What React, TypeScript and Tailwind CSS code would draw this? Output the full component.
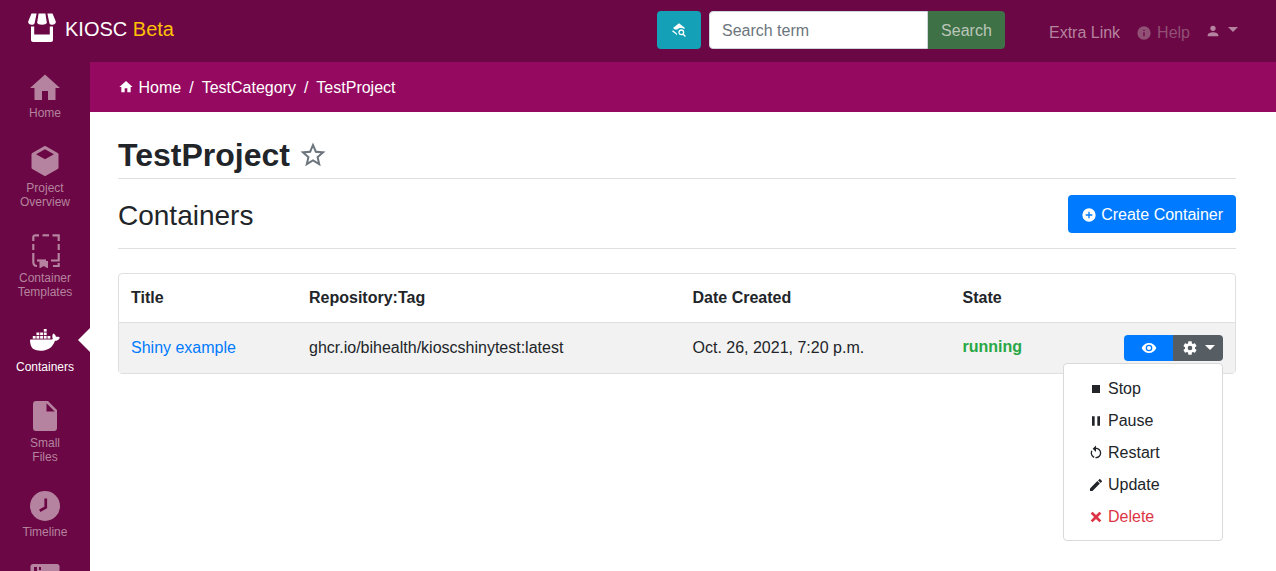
import React from 'react';

const mdi = {
  home: 'M10,20V14H14V20H19V12H22L12,3L2,12H5V20H10Z',
  cube: 'M21,16.5C21,16.88 20.79,17.21 20.47,17.38L12.57,21.82C12.41,21.94 12.21,22 12,22C11.79,22 11.59,21.94 11.43,21.82L3.53,17.38C3.21,17.21 3,16.88 3,16.5V7.5C3,7.12 3.21,6.79 3.53,6.62L11.43,2.18C11.59,2.06 11.79,2 12,2C12.21,2 12.41,2.06 12.57,2.18L20.47,6.62C20.79,6.79 21,7.12 21,7.5V16.5M12,4.15L6.04,7.5L12,10.85L17.96,7.5L12,4.15Z',
  file: 'M13,9V3.5L18.5,9M6,2C4.89,2 4,2.89 4,4V20A2,2 0 0,0 6,22H18A2,2 0 0,0 20,20V8L14,2H6Z',
  eye: 'M12,9A3,3 0 0,0 9,12A3,3 0 0,0 12,15A3,3 0 0,0 15,12A3,3 0 0,0 12,9M12,17A5,5 0 0,1 7,12A5,5 0 0,1 12,7A5,5 0 0,1 17,12A5,5 0 0,1 12,17M12,4.5C7,4.5 2.73,7.61 1,12C2.73,16.39 7,19.5 12,19.5C17,19.5 21.27,16.39 23,12C21.27,7.61 17,4.5 12,4.5Z',
  cog: 'M12,15.5A3.5,3.5 0 0,1 8.5,12A3.5,3.5 0 0,1 12,8.5A3.5,3.5 0 0,1 15.5,12A3.5,3.5 0 0,1 12,15.5M19.43,12.97C19.47,12.65 19.5,12.33 19.5,12C19.5,11.67 19.47,11.34 19.43,11L21.54,9.37C21.73,9.22 21.78,8.95 21.66,8.73L19.66,5.27C19.54,5.05 19.27,4.96 19.05,5.05L16.56,6.05C16.04,5.66 15.5,5.32 14.87,5.07L14.5,2.42C14.46,2.18 14.25,2 14,2H10C9.75,2 9.54,2.18 9.5,2.42L9.13,5.07C8.5,5.32 7.96,5.66 7.44,6.05L4.95,5.05C4.73,4.96 4.46,5.05 4.34,5.27L2.34,8.73C2.21,8.95 2.27,9.22 2.46,9.37L4.57,11C4.53,11.34 4.5,11.67 4.5,12C4.5,12.33 4.53,12.65 4.57,12.97L2.46,14.63C2.27,14.78 2.21,15.05 2.34,15.27L4.34,18.73C4.46,18.95 4.73,19.03 4.95,18.95L7.44,17.94C7.96,18.34 8.5,18.68 9.13,18.93L9.5,21.58C9.54,21.82 9.75,22 10,22H14C14.25,22 14.46,21.82 14.5,21.58L14.87,18.93C15.5,18.67 16.04,18.34 16.56,17.94L19.05,18.95C19.27,19.03 19.54,18.95 19.66,18.73L21.66,15.27C21.78,15.05 21.73,14.78 21.54,14.63L19.43,12.97Z',
  info: 'M13,9H11V7H13M13,17H11V11H13M12,2A10,10 0 0,0 2,12A10,10 0 0,0 12,22A10,10 0 0,0 22,12A10,10 0 0,0 12,2Z',
  account: 'M12,4A4,4 0 0,1 16,8A4,4 0 0,1 12,12A4,4 0 0,1 8,8A4,4 0 0,1 12,4M12,14C16.42,14 20,15.79 20,18V20H4V18C4,15.79 7.58,14 12,14Z',
  stop: 'M18,18H6V6H18V18Z',
  pause: 'M14,19H18V5H14M6,19H10V5H6V19Z',
  restart: 'M12,4C14.1,4 16.1,4.8 17.6,6.3C20.7,9.4 20.7,14.5 17.6,17.6C15.8,19.5 13.3,20.2 10.9,19.9L11.4,17.9C13.1,18.1 14.9,17.5 16.2,16.2C18.5,13.9 18.5,10.1 16.2,7.7C15.1,6.6 13.5,6 12,6V10.6L7,5.6L12,0.6V4M6.3,17.6C3.7,15 3.3,11 5.1,7.9L6.6,9.4C5.5,11.6 5.9,14.4 7.8,16.2C8.3,16.7 8.9,17.1 9.6,17.4L9,19.4C8,19 7.1,18.4 6.3,17.6Z',
  pencil: 'M20.71,7.04C21.1,6.65 21.1,6 20.71,5.63L18.37,3.29C18,2.9 17.35,2.9 16.96,3.29L15.12,5.12L18.87,8.87M3,17.25V21H6.75L17.81,9.93L14.06,6.18L3,17.25Z',
  close: 'M20 6.91L17.09 4L12 9.09L6.91 4L4 6.91L9.09 12L4 17.09L6.91 20L12 14.91L17.09 20L20 17.09L14.91 12L20 6.91Z',
  star: 'M12,15.39L8.24,17.66L9.23,13.38L5.91,10.5L10.29,10.13L12,6.09L13.71,10.13L18.09,10.5L14.77,13.38L15.76,17.66M22,9.24L14.81,8.63L12,2L9.19,8.62L2,9.24L7.45,13.97L5.82,21L12,17.27L18.18,21L16.54,13.97L22,9.24Z',
  plus: 'M17,13H13V17H11V13H7V11H11V7H13V11H17M12,2A10,10 0 0,0 2,12A10,10 0 0,0 12,22A10,10 0 0,0 22,12A10,10 0 0,0 12,2Z',
  layersSearch: 'M19.31 17.9L22.39 21L21 22.39L17.88 19.32C17.19 19.75 16.37 20 15.5 20C13 20 11 18 11 15.5C11 13 13 11 15.5 11C18 11 20 13 20 15.5C20 16.38 19.75 17.21 19.31 17.9M15.5 18C16.88 18 18 16.88 18 15.5C18 14.12 16.88 13 15.5 13C14.12 13 13 14.12 13 15.5C13 16.88 14.12 18 15.5 18M12 2L3 9L5.7 11.1H9.7C11 9.5 13 8.7 15.5 9C17 9 18.5 9.6 19.6 10.5L21 9L12 2ZM3 12.5L1.5 13.7L9.3 19.7C9 19 8.8 18 8.8 17.2L3 12.5Z',
};

function Icon({ d, className }: { d: string; className?: string }) {
  return (
    <svg viewBox="0 0 24 24" className={className} fill="currentColor">
      <path d={d} fillRule="evenodd" />
    </svg>
  );
}

function Caret({ className }: { className?: string }) {
  return <span className={`w-0 h-0 border-x-[5px] border-x-transparent border-t-[5px] ${className ?? ''}`} />;
}

function StoreLogo() {
  return (
    <svg viewBox="0 0 28 29" className="w-[28px] h-[29px] text-white mb-[8px]" fill="currentColor">
      <path d="M3.5 0.5H8.6L6.6 10.2C6 12.2 1 12.4 0.3 9.8C0 9 0.3 8 0.7 7.2Z" />
      <path d="M10.6 0.5H17.4L18.8 9.6C18.8 12.6 9.2 12.6 9.2 9.6Z" />
      <path d="M19.4 0.5H24.5L27.3 7.2C27.7 8 28 9 27.7 9.8C27 12.4 22 12.2 21.4 10.2Z" />
      <path d="M3 13.5H6.2V21.6H21.8V13.5H25V27C25 28 24 29 23 29H5C4 29 3 28 3 27Z" />
    </svg>
  );
}

function TemplatesIcon() {
  return (
    <svg viewBox="0 0 36 36" className="w-9 h-9" fill="none" stroke="currentColor" strokeWidth="2.2">
      <path d="M6.3 9V5.5C6.3 4 7 3.3 8.5 3.3H12" />
      <path d="M15.5 3.3H22" />
      <path d="M25.5 3.3H31.7V9" />
      <path d="M6.3 12V18" />
      <path d="M31.7 12V18" />
      <path d="M6.3 21V30C6.3 33 7.5 34 10 34" />
      <path d="M31.7 21V28.5H24" />
      <path d="M10 28.5H19" />
      <path d="M26 34H31.7V31" />
      <path d="M12.5 29H21V36.5L16.7 34L12.5 36.5Z" fill="currentColor" stroke="none" />
    </svg>
  );
}

function DockerIcon() {
  return (
    <svg viewBox="0 0 24 24" className="w-9 h-9" fill="currentColor">
      <path d="M21.81 10.25C21.75 10.21 21.25 9.82 20.17 9.82C19.89 9.82 19.61 9.85 19.33 9.9C19.12 8.5 17.95 7.79 17.9 7.76L17.61 7.59L17.43 7.86C17.19 8.22 17 8.63 16.92 9.05C16.72 9.85 16.84 10.61 17.25 11.26C16.76 11.54 15.96 11.61 15.79 11.61H2.62C2.28 11.61 2 11.89 2 12.24C2 13.4 2.18 14.56 2.58 15.65C3.03 16.83 3.71 17.7 4.58 18.24C5.56 18.84 7.15 19.18 8.94 19.18C9.75 19.18 10.56 19.11 11.36 18.96C12.47 18.76 13.54 18.37 14.5 17.81C15.3 17.35 16 16.77 16.61 16.09C17.63 14.94 18.24 13.65 18.69 12.5H18.87C19.99 12.5 20.68 12.05 21.06 11.67C21.31 11.43 21.5 11.14 21.64 10.82Z" />
      <rect x="3.85" y="9.34" width="1.9" height="1.75" />
      <rect x="6.3" y="9.34" width="1.9" height="1.75" />
      <rect x="8.75" y="9.34" width="1.9" height="1.75" />
      <rect x="11.2" y="9.34" width="1.9" height="1.75" />
      <rect x="13.65" y="9.34" width="1.9" height="1.75" />
      <rect x="6.3" y="7" width="1.9" height="1.75" />
      <rect x="8.75" y="7" width="1.9" height="1.75" />
      <rect x="11.2" y="7" width="1.9" height="1.75" />
      <rect x="11.2" y="4.66" width="1.9" height="1.75" />
    </svg>
  );
}

function ClockIcon() {
  return (
    <svg viewBox="0 0 24 24" className="w-9 h-9">
      <circle cx="12" cy="12" r="10" fill="currentColor" />
      <path d="M12.5 7V13L8.5 15.2" fill="none" stroke="#6b0744" strokeWidth="1.8" />
    </svg>
  );
}

function CardIcon() {
  return (
    <svg viewBox="0 0 36 36" className="w-9 h-9" fill="currentColor">
      <path d="M6 0H30C31.5 0 32.5 1 32.5 2.5V30H3.5V2.5C3.5 1 4.5 0 6 0Z" />
      <rect x="7" y="3" width="3" height="5" fill="#6b0744" />
      <rect x="12" y="3" width="2" height="3" fill="#6b0744" />
    </svg>
  );
}

function SideItem({ icon, lines, item, gap, active }: { icon: React.ReactNode; lines: string[]; item: string; gap: string; active?: boolean }) {
  return (
    <div className={`relative flex flex-col items-center text-[12px] leading-[14px] ${item} ${active ? 'text-white' : 'text-[#b5839f]'}`}>
      {icon}
      <div className={`${gap} text-center`}>
        {lines.map((l) => (
          <div key={l}>{l}</div>
        ))}
      </div>
      {active && (
        <div className="absolute right-0 top-[6px] w-0 h-0 border-y-[12px] border-y-transparent border-r-[12px] border-r-white" />
      )}
    </div>
  );
}

function MenuItem({ d, label, red }: { d: string; label: string; red?: boolean }) {
  return (
    <div className={`flex items-center h-8 pl-6 ${red ? 'text-[#dc3545]' : 'text-[#212529]'}`}>
      <Icon d={d} className="w-4 h-4 mr-1" />
      {label}
    </div>
  );
}

export default function App() {
  return (
    <div className="w-[1276px] h-[571px] overflow-hidden flex flex-col bg-white font-['Liberation_Sans',Arial,sans-serif] text-base text-[#212529]">
      <nav className="h-[62px] shrink-0 bg-[#6b0744] flex items-center pl-[28px] pr-[38px]">
        <StoreLogo />
        <span className="ml-[9px] mb-[4px] text-[20px] text-white">
          KIOSC <span className="text-[#ffc107]">Beta</span>
        </span>
        <div className="ml-auto flex items-center">
          <div className="flex items-center mb-[2px]">
            <button className="w-[44px] h-[38px] rounded bg-[#14a1b8] text-white flex items-center justify-center">
              <Icon d={mdi.layersSearch} className="w-4 h-4" />
            </button>
            <div className="ml-2 flex h-[38px]">
              <div className="w-[219px] bg-white border border-[#ced4da] rounded-l px-3 pt-[2px] flex items-center text-[#6c757d]">Search term</div>
              <button className="w-[77px] pt-[2px] bg-[#3f7147] rounded-r text-[#bcc7ba]">Search</button>
            </div>
          </div>
          <span className="ml-[44px] mt-[4px] text-[#b5839f]">Extra Link</span>
          <span className="ml-[16px] mt-[4px] flex items-center text-[#915075]">
            <Icon d={mdi.info} className="w-4 h-4 mr-[5px]" />
            Help
          </span>
          <span className="ml-[15px] flex items-center text-[#b5839f]">
            <Icon d={mdi.account} className="w-4 h-4" />
            <Caret className="ml-[7px] mb-[3px] border-t-[#b5839f]" />
          </span>
        </div>
      </nav>

      <div className="flex flex-1 min-h-0">
        <aside className="w-[90px] shrink-0 bg-[#6b0744] pt-2 overflow-hidden">
          <SideItem icon={<Icon d={mdi.home} className="w-9 h-9" />} lines={['Home']} item="pb-[23px]" gap="mt-0" />
          <SideItem icon={<Icon d={mdi.cube} className="w-9 h-9" />} lines={['Project', 'Overview']} item="pb-[23px]" gap="mt-[2px]" />
          <SideItem icon={<TemplatesIcon />} lines={['Container', 'Templates']} item="pb-[23px]" gap="mt-[3px]" />
          <SideItem icon={<DockerIcon />} lines={['Containers']} item="pb-[24px]" gap="mt-[2px]" active />
          <SideItem icon={<Icon d={mdi.file} className="w-9 h-9" />} lines={['Small', 'Files']} item="pb-[24px]" gap="mt-[2px]" />
          <SideItem icon={<ClockIcon />} lines={['Timeline']} item="pb-[25px]" gap="mt-[1px]" />
          <div className="flex justify-center text-[#b5839f]">
            <CardIcon />
          </div>
        </aside>

        <main className="flex-1 min-w-0">
          <div className="h-[50px] bg-[#950a60] text-white flex items-center pl-[28px]">
            <Icon d={mdi.home} className="w-4 h-4 mr-[4.5px]" />
            <span className="mt-[1px]">Home</span>
            <span className="mx-2 mt-[1px]">/</span>
            <span className="mt-[1px]">TestCategory</span>
            <span className="mx-2 mt-[1px]">/</span>
            <span className="mt-[1px]">TestProject</span>
          </div>

          <div className="pl-[28px] pr-[40px]">
            <div className="h-[67px] flex items-end border-b border-[#dfdfdf] pb-[4px]">
              <h1 className="text-[32px] leading-[38px] font-bold">TestProject</h1>
              <Icon d={mdi.star} className="w-[30px] h-[30px] ml-[8px] mb-[4px] text-[#6c757d]" />
            </div>
            <div className="h-[70px] flex items-center justify-between border-b border-[#dfdfdf]">
              <h2 className="text-[28px] leading-[34px] mt-[5px]">Containers</h2>
              <button className="h-[38px] mt-[1px] pt-[1px] px-[13px] rounded bg-[#007bff] text-white flex items-center">
                <Icon d={mdi.plus} className="w-4 h-4 mr-1" />
                Create Container
              </button>
            </div>

            <div className="mt-6 border border-[#dfdfdf] rounded">
              <table className="w-full table-fixed">
                <thead>
                  <tr className="h-[48px] border-b border-[#dfdfdf] text-left">
                    <th className="w-[178px] pl-3 font-bold">Title</th>
                    <th className="w-[383.5px] pl-3 font-bold">Repository:Tag</th>
                    <th className="w-[270px] pl-3 font-bold">Date Created</th>
                    <th className="pl-3 font-bold">State</th>
                  </tr>
                </thead>
                <tbody>
                  <tr className="h-[51px] bg-[#f2f2f2]">
                    <td className="pl-3 text-[#007bff]">Shiny example</td>
                    <td className="pl-3">ghcr.io/bihealth/kioscshinytest:latest</td>
                    <td className="pl-3">Oct. 26, 2021, 7:20 p.m.</td>
                    <td className="pl-3 pr-3">
                      <div className="flex items-center justify-between">
                        <span className="font-bold text-[#28a745] pb-[1px]">running</span>
                        <div className="relative flex h-[26px]">
                          <button className="w-[49px] rounded-l bg-[#007bff] text-white flex items-center justify-center">
                            <Icon d={mdi.eye} className="w-4 h-4" />
                          </button>
                          <button className="w-[50px] rounded-r bg-[#565e64] text-white flex items-center justify-center">
                            <Icon d={mdi.cog} className="w-4 h-4" />
                            <Caret className="ml-[7px] border-t-white" />
                          </button>
                          <div className="absolute right-0 top-[28px] w-[160px] pt-[9px] pb-[7px] bg-white border border-[#d9d9d9] rounded">
                            <MenuItem d={mdi.stop} label="Stop" />
                            <MenuItem d={mdi.pause} label="Pause" />
                            <MenuItem d={mdi.restart} label="Restart" />
                            <MenuItem d={mdi.pencil} label="Update" />
                            <MenuItem d={mdi.close} label="Delete" red />
                          </div>
                        </div>
                      </div>
                    </td>
                  </tr>
                </tbody>
              </table>
            </div>
          </div>
        </main>
      </div>
    </div>
  );
}
